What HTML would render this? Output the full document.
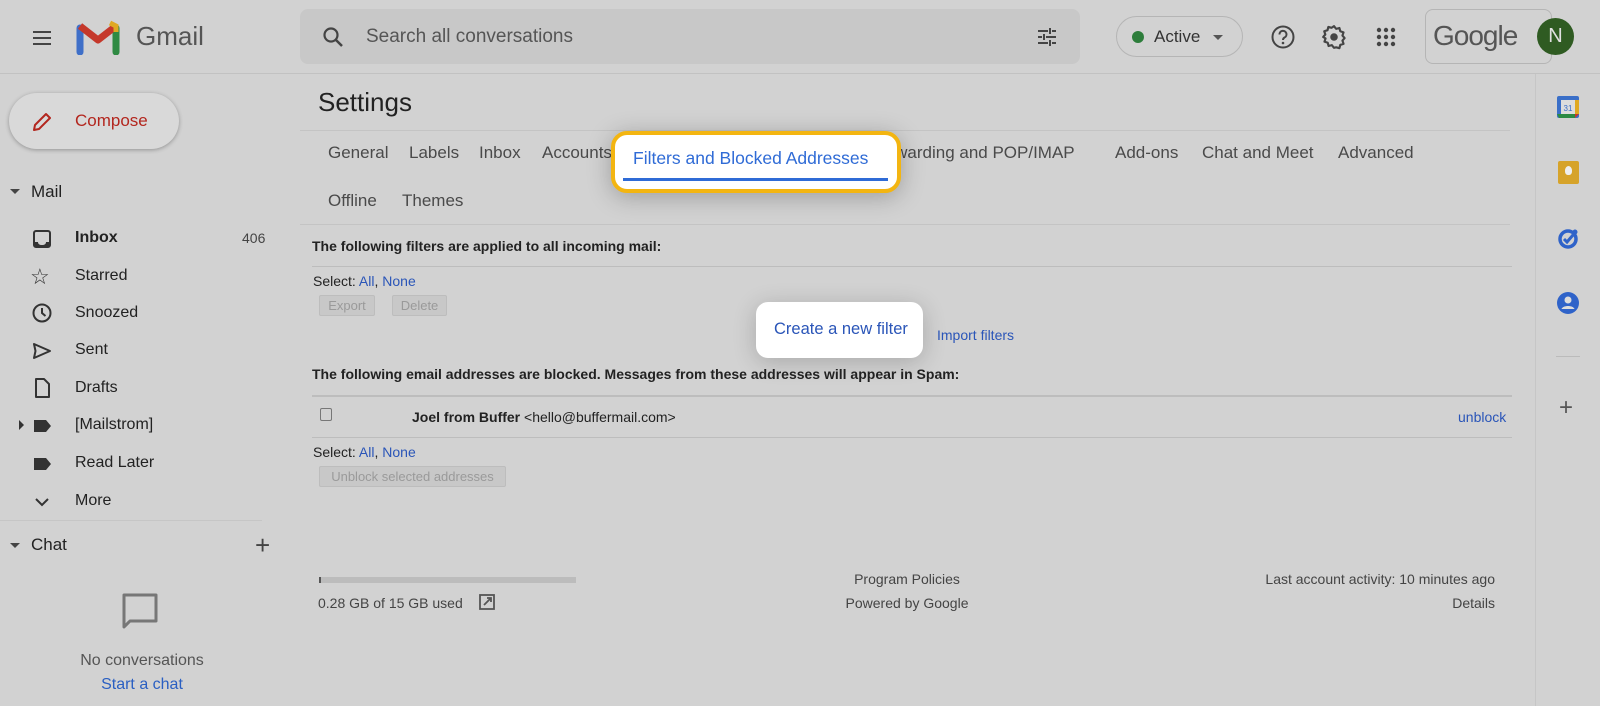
<!DOCTYPE html>
<html><head><meta charset="utf-8">
<style>
*{margin:0;padding:0;box-sizing:border-box}
body{width:1600px;height:706px;overflow:hidden;background:#d2d2d2;font-family:"Liberation Sans",Arial,sans-serif;color:#222;position:relative}
.a{position:absolute;white-space:nowrap}
.nav{font-size:16px;color:#222}
.tab{font-size:17px;color:#4a4a4a;top:143px}
.blue{color:#2a55b8}
.btn{position:absolute;background:#c8c8c8;border:1px solid #bdbdbd;color:#9a9a9a;font-size:13px;text-align:center;line-height:19px;border-radius:2px}
.sm{font-size:14px}
.ft{font-size:14px;color:#444}
</style></head><body>
<div class="a" style="left:0;top:73px;width:1600px;height:1px;background:#c2c2c2"></div>
<svg class="a" style="left:30px;top:26px" width="24" height="24" viewBox="0 0 24 24"><path d="M3 6h18M3 12h18M3 18h18" stroke="#444" stroke-width="2"/></svg>
<svg class="a" style="left:76px;top:19px" width="44" height="36" viewBox="0 0 44 36">
<path d="M4 33V9" stroke="#3f6fc8" stroke-width="7" stroke-linecap="round"/>
<path d="M40 33V9" stroke="#2f8a43" stroke-width="7" stroke-linecap="round"/>
<path d="M4 7L22 21L40 7" stroke="#c5382b" stroke-width="7" fill="none" stroke-linejoin="round"/>
<path d="M34 4l6 3v6" stroke="#e0a922" stroke-width="5" fill="none"/>
</svg>
<div class="a" style="left:136px;top:21px;font-size:26px;color:#555">Gmail</div>
<div class="a" style="left:300px;top:9px;width:780px;height:55px;background:#c8c8c8;border-radius:8px"></div>
<svg class="a" style="left:321px;top:25px" width="24" height="24" viewBox="0 0 24 24"><circle cx="10" cy="10" r="6.5" stroke="#444" stroke-width="2.2" fill="none"/><path d="M15 15l6 6" stroke="#444" stroke-width="2.5"/></svg>
<div class="a" style="left:366px;top:26px;font-size:19px;color:#555">Search all conversations</div>
<svg class="a" style="left:1035px;top:25px" width="24" height="24" viewBox="0 0 24 24"><path d="M3 6h10M17 6h4M15 3v6M3 12h4M11 12h10M9 9v6M3 18h10M17 18h4M15 15v6" stroke="#444" stroke-width="2"/></svg>
<div class="a" style="left:1116px;top:16px;width:127px;height:41px;border:1px solid #b5b5b5;border-radius:21px"></div>
<div class="a" style="left:1132px;top:31px;width:12px;height:12px;border-radius:50%;background:#2d7d3b"></div>
<div class="a" style="left:1154px;top:27px;font-size:17px;color:#333">Active</div>
<div class="a" style="left:1213px;top:35px;border-left:5px solid transparent;border-right:5px solid transparent;border-top:5px solid #555"></div>
<svg class="a" style="left:1270px;top:24px" width="26" height="26" viewBox="0 0 26 26"><circle cx="13" cy="13" r="10.5" stroke="#444" stroke-width="2" fill="none"/><path d="M9.5 10.5a3.5 3.5 0 1 1 5 3c-1.2.7-1.5 1.3-1.5 2.5" stroke="#444" stroke-width="2" fill="none"/><circle cx="13" cy="19" r="1.3" fill="#444"/></svg>
<svg class="a" style="left:1321px;top:24px" width="26" height="26" viewBox="0 0 24 24"><path d="M12 2l2 2.5 3-.8.8 3 3 1-1 3 2 2.3-2 2.3 1 3-3 1-.8 3-3-.8L12 22l-2-2.5-3 .8-.8-3-3-1 1-3L2 12l2-2.3-1-3 3-1 .8-3 3 .8z" stroke="#444" stroke-width="2" fill="none" stroke-linejoin="round"/><circle cx="12" cy="12" r="3.5" fill="#444"/></svg>
<svg class="a" style="left:1375px;top:26px" width="22" height="22" viewBox="0 0 22 22" fill="#444"><circle cx="4" cy="4" r="2.2"/><circle cx="11" cy="4" r="2.2"/><circle cx="18" cy="4" r="2.2"/><circle cx="4" cy="11" r="2.2"/><circle cx="11" cy="11" r="2.2"/><circle cx="18" cy="11" r="2.2"/><circle cx="4" cy="18" r="2.2"/><circle cx="11" cy="18" r="2.2"/><circle cx="18" cy="18" r="2.2"/></svg>
<div class="a" style="left:1425px;top:9px;width:127px;height:55px;border:1px solid #b5b5b5;border-radius:8px"></div>
<div class="a" style="left:1433px;top:20px;font-size:28px;color:#555;letter-spacing:-1px">Google</div>
<div class="a" style="left:1537px;top:18px;width:37px;height:37px;border-radius:50%;background:#2f5b22;color:#e0e0e0;font-size:20px;text-align:center;line-height:37px">N</div>
<div class="a" style="left:1535px;top:74px;width:1px;height:632px;background:#c6c6c6"></div>
<svg class="a" style="left:1557px;top:96px" width="22" height="22" viewBox="0 0 22 22"><rect x="0" y="0" width="22" height="22" rx="2" fill="#3a6fc8"/><rect x="4" y="4" width="14" height="14" fill="#ddd"/><path d="M0 18h18v4H2z" fill="#2c8a44"/><path d="M18 4h4v14h-4z" fill="#e0a922"/><path d="M18 18h4l-4 4z" fill="#c5382b"/><text x="11" y="15" font-size="8" text-anchor="middle" fill="#3a6fc8" font-family="Liberation Sans">31</text></svg>
<div class="a" style="left:1558px;top:161px;width:21px;height:23px;background:#d6a32a;border-radius:2px"></div>
<div class="a" style="left:1565px;top:166px;width:7px;height:9px;background:#eee;border-radius:50% 50% 40% 40%"></div>
<svg class="a" style="left:1557px;top:228px" width="22" height="22" viewBox="0 0 22 22"><circle cx="11" cy="11" r="8" stroke="#2f63c9" stroke-width="3.5" fill="none"/><path d="M7 11l3 3 6-7" stroke="#2f63c9" stroke-width="3" fill="none"/><circle cx="18" cy="4" r="2.5" fill="#2f63c9"/></svg>
<svg class="a" style="left:1557px;top:292px" width="22" height="22" viewBox="0 0 22 22"><circle cx="11" cy="11" r="11" fill="#2f63c9"/><circle cx="11" cy="8" r="3.5" fill="#ddd"/><path d="M4.5 17c1.5-4 11.5-4 13 0" fill="#ddd"/></svg>
<div class="a" style="left:1556px;top:356px;width:24px;height:1px;background:#bbb"></div>
<div class="a" style="left:1559px;top:394px;font-size:24px;color:#555">+</div>
<div class="a" style="left:9px;top:93px;width:170px;height:56px;border-radius:28px;background:#d9d9d9;box-shadow:0 1px 4px rgba(0,0,0,.3)"></div>
<svg class="a" style="left:30px;top:110px" width="24" height="24" viewBox="0 0 24 24"><path d="M4 20l1-5L16 4l4 4L9 19z" stroke="#b3261e" stroke-width="2" fill="none" stroke-linejoin="round"/></svg>
<div class="a" style="left:75px;top:111px;font-size:17px;color:#b3261e">Compose</div>
<div class="a" style="left:10px;top:189px;border-left:5px solid transparent;border-right:5px solid transparent;border-top:5px solid #444"></div>
<div class="a nav" style="left:31px;top:182px;font-size:17px">Mail</div>
<svg class="a" style="left:30px;top:227px" width="24" height="24" viewBox="0 0 24 24"><rect x="4" y="4" width="16" height="16" rx="2" stroke="#333" stroke-width="2" fill="none"/><path d="M4 15h4c0 2 1.5 3 4 3s4-1 4-3h4v5H4z" fill="#333"/></svg>
<div class="a nav" style="left:75px;top:229px;font-weight:bold">Inbox</div>
<div class="a" style="left:242px;top:230px;font-size:14px;color:#444">406</div>
<div class="a" style="left:30px;top:264px;font-size:22px;color:#333">☆</div>
<div class="a nav" style="left:75px;top:267px">Starred</div>
<svg class="a" style="left:30px;top:301px" width="24" height="24" viewBox="0 0 24 24"><circle cx="12" cy="12" r="8.5" stroke="#333" stroke-width="2" fill="none"/><path d="M12 7v5l3.5 3" stroke="#333" stroke-width="2" fill="none"/></svg>
<div class="a nav" style="left:75px;top:304px">Snoozed</div>
<svg class="a" style="left:30px;top:339px" width="24" height="24" viewBox="0 0 24 24"><path d="M4 5l16 7-16 7 1.5-7z" stroke="#333" stroke-width="2" fill="none" stroke-linejoin="round"/></svg>
<div class="a nav" style="left:75px;top:341px">Sent</div>
<svg class="a" style="left:30px;top:376px" width="24" height="24" viewBox="0 0 24 24"><path d="M6 3h8l5 5v13H6z" stroke="#333" stroke-width="2" fill="none" stroke-linejoin="round"/></svg>
<div class="a nav" style="left:75px;top:379px">Drafts</div>
<div class="a" style="left:19px;top:420px;border-top:5px solid transparent;border-bottom:5px solid transparent;border-left:5px solid #333"></div>
<svg class="a" style="left:30px;top:414px" width="24" height="24" viewBox="0 0 24 24"><path d="M4 6h12l5 6-5 6H4z" fill="#333"/></svg>
<div class="a nav" style="left:75px;top:416px">[Mailstrom]</div>
<svg class="a" style="left:30px;top:452px" width="24" height="24" viewBox="0 0 24 24"><path d="M4 6h12l5 6-5 6H4z" fill="#333"/></svg>
<div class="a nav" style="left:75px;top:454px">Read Later</div>
<svg class="a" style="left:30px;top:490px" width="24" height="24" viewBox="0 0 24 24"><path d="M6 9l6 6 6-6" stroke="#333" stroke-width="2" fill="none"/></svg>
<div class="a nav" style="left:75px;top:492px">More</div>
<div class="a" style="left:0;top:520px;width:262px;height:1px;background:#c6c6c6"></div>
<div class="a" style="left:10px;top:543px;border-left:5px solid transparent;border-right:5px solid transparent;border-top:5px solid #444"></div>
<div class="a nav" style="left:31px;top:535px;font-size:17px">Chat</div>
<div class="a" style="left:255px;top:530px;font-size:26px;color:#444">+</div>
<svg class="a" style="left:121px;top:592px" width="40" height="40" viewBox="0 0 40 40"><path d="M3 3h32v26H9l-6 6z" stroke="#777" stroke-width="3" fill="none" stroke-linejoin="round"/></svg>
<div class="a" style="left:0;top:652px;width:284px;text-align:center;font-size:16px;color:#555">No conversations</div>
<div class="a" style="left:0;top:676px;width:284px;text-align:center;font-size:16px;color:#2a5fc2">Start a chat</div>
<div class="a" style="left:318px;top:87px;font-size:26px;color:#222">Settings</div>
<div class="a" style="left:300px;top:130px;width:1210px;height:1px;background:#c4c4c4"></div>
<div class="a tab" style="left:328px">General</div>
<div class="a tab" style="left:409px">Labels</div>
<div class="a tab" style="left:479px">Inbox</div>
<div class="a tab" style="left:542px">Accounts</div>
<div class="a tab" style="left:880px">orwarding and POP/IMAP</div>
<div class="a tab" style="left:1115px">Add-ons</div>
<div class="a tab" style="left:1202px">Chat and Meet</div>
<div class="a tab" style="left:1338px">Advanced</div>
<div class="a tab" style="left:328px;top:191px">Offline</div>
<div class="a tab" style="left:402px;top:191px">Themes</div>
<div class="a" style="left:300px;top:224px;width:1210px;height:1px;background:#c4c4c4"></div>
<div class="a" style="left:611px;top:131px;width:290px;height:62px;background:#fff;border:4px solid #f3b511;border-radius:16px;box-shadow:0 4px 24px rgba(0,0,0,.25)"></div>
<div class="a" style="left:633px;top:148px;font-size:17.5px;color:#2f6bd6">Filters and Blocked Addresses</div>
<div class="a" style="left:623px;top:178px;width:265px;height:3px;background:#2f6bd6"></div>
<div class="a sm" style="left:312px;top:238px;font-weight:bold">The following filters are applied to all incoming mail:</div>
<div class="a" style="left:312px;top:266px;width:1200px;height:1px;background:#bdbdbd"></div>
<div class="a sm" style="left:313px;top:273px">Select: <span class="blue">All</span>, <span class="blue">None</span></div>
<div class="btn" style="left:319px;top:295px;width:56px;height:21px">Export</div>
<div class="btn" style="left:392px;top:295px;width:55px;height:21px">Delete</div>
<div class="a" style="left:756px;top:302px;width:167px;height:56px;background:#fff;border-radius:12px;box-shadow:0 4px 24px rgba(0,0,0,.2)"></div>
<div class="a" style="left:774px;top:320px;font-size:16.5px;color:#2a55b8">Create a new filter</div>
<div class="a sm blue" style="left:937px;top:327px">Import filters</div>
<div class="a sm" style="left:312px;top:366px;font-weight:bold">The following email addresses are blocked. Messages from these addresses will appear in Spam:</div>
<div class="a" style="left:312px;top:395px;width:1200px;height:2px;background:#bdbdbd"></div>
<div class="a" style="left:320px;top:408px;width:12px;height:13px;border:1px solid #777;border-radius:2px"></div>
<div class="a sm" style="left:412px;top:409px"><b>Joel from Buffer</b> &lt;hello@buffermail.com&gt;</div>
<div class="a sm blue" style="left:1458px;top:409px">unblock</div>
<div class="a" style="left:312px;top:437px;width:1200px;height:1px;background:#bdbdbd"></div>
<div class="a sm" style="left:313px;top:444px">Select: <span class="blue">All</span>, <span class="blue">None</span></div>
<div class="btn" style="left:319px;top:466px;width:187px;height:21px">Unblock selected addresses</div>
<div class="a" style="left:319px;top:577px;width:257px;height:6px;background:#bcbcbc"></div>
<div class="a" style="left:319px;top:577px;width:2px;height:6px;background:#555"></div>
<div class="a ft" style="left:318px;top:595px">0.28 GB of 15 GB used</div>
<svg class="a" style="left:478px;top:593px" width="18" height="18" viewBox="0 0 18 18"><rect x="2" y="2" width="14" height="14" stroke="#555" stroke-width="1.8" fill="none"/><path d="M6 12l7-7M9 5h4v4" stroke="#555" stroke-width="1.8" fill="none"/></svg>
<div class="a ft" style="left:807px;top:571px;width:200px;text-align:center">Program Policies</div>
<div class="a ft" style="left:807px;top:595px;width:200px;text-align:center">Powered by Google</div>
<div class="a ft" style="left:1195px;top:571px;width:300px;text-align:right">Last account activity: 10 minutes ago</div>
<div class="a ft" style="left:1195px;top:595px;width:300px;text-align:right">Details</div>
</body></html>
